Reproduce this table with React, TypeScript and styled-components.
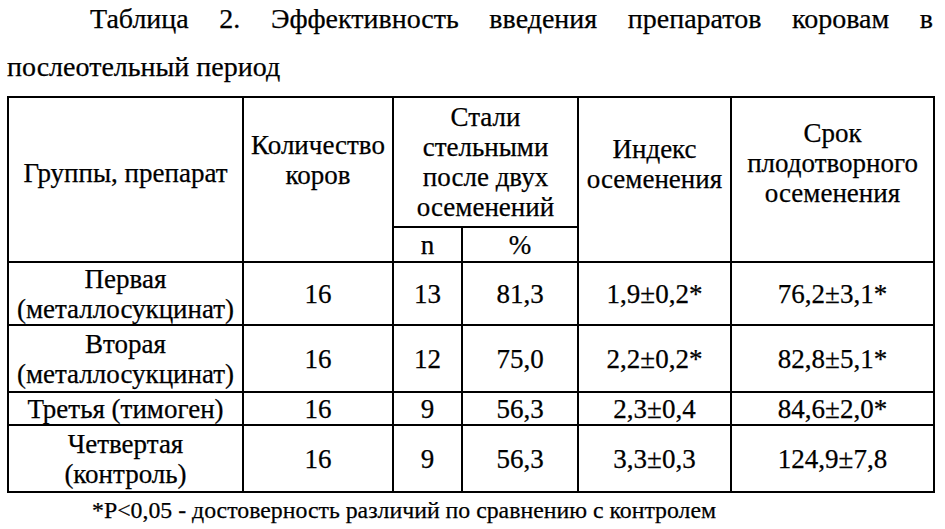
import React from "react";
import styled, { createGlobalStyle } from "styled-components";

const serif = `"Liberation Serif", "Times New Roman", serif`;

const Global = createGlobalStyle`
  html, body { margin: 0; padding: 0; background: #fff; }
  body { font-family: ${serif}; color: #000; }
`;

const Page = styled.div`
  width: 945px;
  height: 529px;
  overflow: hidden;
  padding: 0 12px 0 7px;
  box-sizing: border-box;
  font-family: ${serif};
  color: #000;
  -webkit-text-stroke: 0.25px #000;
`;

const Title = styled.p`
  margin: -5px 0 0;
  font-size: 28px;
  line-height: 48px;
  text-align: justify;
  text-indent: 83px;
  height: 101px;
`;

const Table = styled.table`
  border-collapse: collapse;
  table-layout: fixed;
  width: 926px;
  font-family: ${serif};
  font-size: 27px;
  line-height: 30px;
  color: #000;
`;

const Col = styled.col<{ $w: number }>`
  width: ${(p) => p.$w}px;
`;

const Cell = styled.td<{ $h?: number; $pb?: number }>`
  border: 2px solid #000;
  padding: 0 0 ${(p) => p.$pb ?? 0}px;
  text-align: center;
  vertical-align: middle;
  height: ${(p) => (p.$h ? `${p.$h}px` : "auto")};
  white-space: nowrap;
  overflow: hidden;
`;

const Foot = styled.div`
  padding: 2px 0 0 85px;
  font-size: 23.8px;
  line-height: 30px;
`;

const widths = [235, 150, 69, 116, 153, 203];

const rows = [
  { g: ["Первая", "(металлосукцинат)"], k: "16", n: "13", p: "81,3", i: "1,9±0,2*", s: "76,2±3,1*", h: 61 },
  { g: ["Вторая", "(металлосукцинат)"], k: "16", n: "12", p: "75,0", i: "2,2±0,2*", s: "82,8±5,1*", h: 65 },
  { g: ["Третья (тимоген)"], k: "16", n: "9", p: "56,3", i: "2,3±0,4", s: "84,6±2,0*", h: 31 },
  { g: ["Четвертая", "(контроль)"], k: "16", n: "9", p: "56,3", i: "3,3±0,3", s: "124,9±7,8", h: 65 },
];

const Lines = ({ items }: { items: string[] }) => (
  <>
    {items.map((l, i) => (
      <React.Fragment key={l}>
        {i > 0 && <br />}
        {l}
      </React.Fragment>
    ))}
  </>
);

export default function App() {
  return (
    <Page>
      <Global />
      <Title>
        Таблица 2. Эффективность введения препаратов коровам в послеотельный период
      </Title>
      <Table>
        <colgroup>
          {widths.map((w, i) => (
            <Col key={i} $w={w} />
          ))}
        </colgroup>
        <tbody>
          <tr>
            <Cell rowSpan={2} $pb={14}>Группы, препарат</Cell>
            <Cell rowSpan={2} $pb={40}>
              <Lines items={["Количество", "коров"]} />
            </Cell>
            <Cell colSpan={2} $h={128}>
              <Lines items={["Стали", "стельными", "после двух", "осеменений"]} />
            </Cell>
            <Cell rowSpan={2} $pb={32}>
              <Lines items={["Индекс", "осеменения"]} />
            </Cell>
            <Cell rowSpan={2} $pb={34}>
              <Lines items={["Срок", "плодотворного", "осеменения"]} />
            </Cell>
          </tr>
          <tr>
            <Cell $h={33}>n</Cell>
            <Cell $h={33}>%</Cell>
          </tr>
          {rows.map((r) => (
            <tr key={r.g.join()}>
              <Cell $h={r.h}>
                <Lines items={r.g} />
              </Cell>
              <Cell>{r.k}</Cell>
              <Cell>{r.n}</Cell>
              <Cell>{r.p}</Cell>
              <Cell>{r.i}</Cell>
              <Cell>{r.s}</Cell>
            </tr>
          ))}
        </tbody>
      </Table>
      <Foot>*P&lt;0,05 - достоверность различий по сравнению с контролем</Foot>
    </Page>
  );
}
